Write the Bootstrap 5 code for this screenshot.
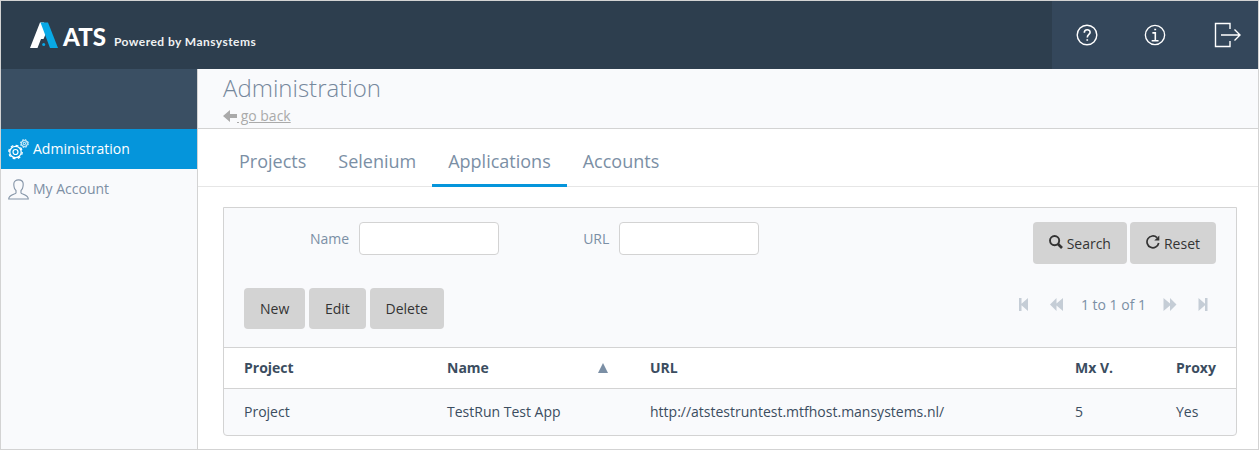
<!DOCTYPE html>
<html lang="en">
<head>
<meta charset="utf-8">
<meta name="viewport" content="width=device-width, initial-scale=1">
<title>ATS - Administration</title>
<link href="https://cdn.jsdelivr.net/npm/bootstrap@5.3.0/dist/css/bootstrap.min.css" rel="stylesheet">
<style>
body{font:14px/20px "Open Sans","Noto Sans",sans-serif;color:#3b4d60;background:#fff}
.app{height:450px;border:1px solid #d3d3d3;overflow:hidden}
svg{display:block;flex:none}
.topbar{height:68px;background:#2d3e4e;color:#fff}
.brand{padding-left:29px;padding-top:20px}
.brand-name{font:900 24px/30px Lato,sans-serif;width:55px;padding-left:4px;padding-top:1px;letter-spacing:0}
.brand-by{font:bold 12px/16px Lato,sans-serif;padding-top:13px;letter-spacing:.45px;color:#f0f2f3}
.tools{width:206px;background:#34475b}
.tools a{width:70px;display:flex;justify-content:center;align-items:center}
.tools a:first-child{padding-left:1px}
.tools a:nth-child(2){padding-left:1px}
.tools a:last-child{padding-left:8px}
.side{width:197px;height:381px;background:#f9fafc;border-right:1px solid #d3d3d3}
.side-top{height:60px;background:#3a4f63}
.side .nav-link{height:40px;padding:0 0 0 7px;gap:4px;color:#7d8fa4}
.side .nav-link.active{background:#0595db;color:#fff}
.page-head{height:60px;padding:4px 25px 0;background:#f9fafc;border-bottom:1px solid #d3d3d3}
.page-head h1{font-size:24px;font-weight:300;line-height:29px;color:#76889c}
.back{color:#aaa;line-height:20px;margin-top:4px}
.tabs{height:58px;padding-left:25px;border-bottom:1px solid #e6e6e6}
.tabs .nav-link{height:58px;padding:14px 16px 0;font-size:18px;line-height:36px;color:#7b8fa5;border-bottom:3px solid transparent}
.tabs .nav-link.active{border-color:#0595db}
.grid-panel{margin:20px 21px 0 25px;border:1px solid #d3d3d3;border-radius:0 0 4px 4px;background:#f9fafc;height:229px;overflow:hidden}
.filters{padding:14px 20px 0 86px;height:80px}
.filters label{color:#7b8fa5;line-height:33px;margin-right:10px}
.filters .url-label{margin-left:84px}
.filters .form-control{width:140px;height:33px;border-color:#d3d3d3;border-radius:4px}
.btn-grey{--bs-btn-bg:#d3d3d3;--bs-btn-color:#333;--bs-btn-border-width:0;--bs-btn-padding-x:16px;--bs-btn-padding-y:0;height:41px;font-size:14px;line-height:20px;border-radius:4px}
.btn-tall{height:42px;padding-top:2px}
.btn-group-gap{gap:3.7px}
.filters .btn-group-gap{gap:3px}
.actions{height:59px;padding:0 28px 0 20px}
.pager{color:#7b8fa5;height:33px;gap:21px}
.pager span{margin:0 -4px}
.pager svg{fill:#c5cdd6}
.data-table{font-size:14px;table-layout:fixed;--bs-table-bg:transparent;color:#3b4d60}
.data-table th,.data-table td{padding:0 20px;color:#3b4d60;border:0;white-space:nowrap;vertical-align:middle}
.data-table thead tr{height:41px;background:#fff;border-top:1px solid #d3d3d3;border-bottom:1px solid #d3d3d3}
.data-table tbody tr{height:46px}
.sort{padding-right:2px}
</style>
</head>
<body>
<div class="app">
  <header class="topbar d-flex justify-content-between">
    <div class="brand d-flex align-items-start">
      <svg width="29" height="28" viewBox="0 0 29 28"><path fill="#fff" d="M10 1.500h4l3 8.500-3.500 8H11l-3.500 9H0z"/><path fill="#08a9e6" d="M10.500 1.500h7.500l10 25.500H20z"/><circle cx="13.700" cy="23.500" r="1.500" fill="#08a9e6"/></svg>
      <div class="brand-name">ATS</div><div class="brand-by">Powered by Mansystems</div>
    </div>
    <nav class="tools d-flex">
      <a href="#" aria-label="Help"><svg width="22" height="22" viewBox="0 0 22 22" fill="none" stroke="#fff" stroke-width="1.4"><circle cx="11" cy="11" r="9.8"/><path d="M8.300 8.700c0-4 5.800-3.800 5.800-.5 0 2.200-2.800 2.300-2.800 5.200M10.400 16h1.700" stroke-width="1.6"/></svg></a>
      <a href="#" aria-label="Info"><svg width="22" height="22" viewBox="0 0 21 21" fill="none" stroke="#fff" stroke-width="1.3"><circle cx="10.5" cy="10.5" r="9.200"/><path d="M8 8.500h2.800v7M7.300 16h6.600M9.800 5.300h1.800" stroke-width="1.5"/></svg></a>
      <a href="#" aria-label="Sign out"><svg width="28" height="26" viewBox="0 0 28 26" fill="none" stroke="#fff" stroke-width="1.4"><path d="M16 7V1.500H1.500V24.500H16V19M7 13h19M20.500 7.500L26 13l-5.500 5.500"/></svg></a>
    </nav>
  </header>
  <div class="d-flex">
    <aside class="side flex-shrink-0">
      <div class="side-top"></div>
      <nav class="nav flex-column">
        <a class="nav-link active d-flex align-items-center" href="#">
          <svg width="21" height="21" viewBox="0 0 21 21" fill="none" stroke="#fff"><circle cx="7.500" cy="13" r="5.700" stroke-width="1.200"/><circle cx="7.500" cy="13" r="6.700" stroke-width="1.300" stroke-dasharray="2.800 2.462"/><circle cx="7.500" cy="13" r="2.500" stroke-width="1.200"/><circle cx="16.400" cy="4.500" r="3"/><circle cx="16.400" cy="4.500" r="3.900" stroke-dasharray="1.800 1.263"/><circle cx="16.400" cy="4.500" r="1.200"/></svg>Administration</a>
        <a class="nav-link d-flex align-items-center" href="#">
          <svg width="21" height="21" viewBox="0 0 21 21" fill="none" stroke="#8494a7" stroke-width="1.100"><path d="M8 14v-2.500C6.700 10.500 5.800 8 5.800 5c0-5.500 9.400-5.500 9.400 0 0 3-.9 5.500-2.200 6.500V14c1 1.500 7.300 1.700 7.300 6H.7c0-4.300 6.300-4.500 7.300-6z"/></svg>My Account</a>
      </nav>
    </aside>
    <main class="flex-grow-1">
      <div class="page-head">
        <h1 class="mb-0">Administration</h1>
        <a class="back d-flex align-items-center text-decoration-none" href="#"><svg width="14" height="12" viewBox="0 0 14 12"><path fill="#aaa" d="M0 6l7-6v4h7v4H7v4z"/></svg><u style="white-space:pre"> go back</u></a>
      </div>
      <nav class="nav tabs">
        <a class="nav-link" href="#">Projects</a><a class="nav-link" href="#">Selenium</a><a class="nav-link active" href="#">Applications</a><a class="nav-link" href="#">Accounts</a>
      </nav>
      <section class="grid-panel">
        <form class="filters d-flex align-items-start">
          <label for="name">Name</label><input id="name" class="form-control">
          <label for="url" class="url-label">URL</label><input id="url" class="form-control">
          <div class="d-flex ms-auto btn-group-gap">
            <button type="button" class="btn btn-grey btn-tall d-flex align-items-center"><svg class="mb-1" width="14" height="14" viewBox="0 0 14 14" fill="none" stroke="#333"><circle cx="5.600" cy="5.600" r="4.600" stroke-width="1.900"/><path d="M9 9l4 4" stroke-width="2.700"/></svg><span class="ps-1">Search</span></button>
            <button type="button" class="btn btn-grey btn-tall d-flex align-items-center"><svg class="mb-1" width="14" height="14" viewBox="0 0 14 14" fill="none" stroke="#333" stroke-width="1.700"><path d="M11 2.600A5.900 5.900 0 1 0 12.700 8"/><path fill="#333" stroke="none" d="M13.300.5v5H8.300z"/></svg><span class="ps-1">Reset</span></button>
          </div>
        </form>
        <div class="actions d-flex justify-content-between align-items-start">
          <div class="d-flex btn-group-gap"><button class="btn btn-grey">New</button><button class="btn btn-grey">Edit</button><button class="btn btn-grey">Delete</button></div>
          <div class="pager d-flex align-items-center">
            <svg width="10" height="13" viewBox="0 0 10 13"><path d="M0 0h2.500v5.700L9 0v13L2.500 7.300V13H0z"/></svg>
            <svg width="14" height="13" viewBox="0 0 14 13"><path d="M0 6.500L6.500 0v5.500L13 0v13L6.500 7.500V13z"/></svg>
            <span>1 to 1 of 1</span>
            <svg width="14" height="13" viewBox="0 0 14 13"><path d="M13.500 6.500L7 0v5.500L.5 0v13L7 7.500V13z"/></svg>
            <svg width="10" height="13" viewBox="0 0 10 13"><path d="M9.500 0H7v5.700L.5 0v13L7 7.300V13h2.500z"/></svg>
          </div>
        </div>
        <table class="table data-table mb-0">
          <colgroup><col style="width:203px"><col style="width:203px"><col style="width:425px"><col style="width:101px"><col></colgroup>
          <thead><tr><th>Project</th><th><div class="d-flex justify-content-between">Name<span class="sort"><svg width="10" height="20" viewBox="0 0 10 20"><path fill="#7b8fa5" d="M5 5l5 10H0z"/></svg></span></div></th><th>URL</th><th>Mx V.</th><th>Proxy</th></tr></thead>
          <tbody><tr><td>Project</td><td>TestRun Test App</td><td>http://atstestruntest.mtfhost.mansystems.nl/</td><td>5</td><td>Yes</td></tr></tbody>
        </table>
      </section>
    </main>
  </div>
</div>
<script src="https://cdn.jsdelivr.net/npm/bootstrap@5.3.0/dist/js/bootstrap.bundle.min.js"></script>
</body>
</html>
